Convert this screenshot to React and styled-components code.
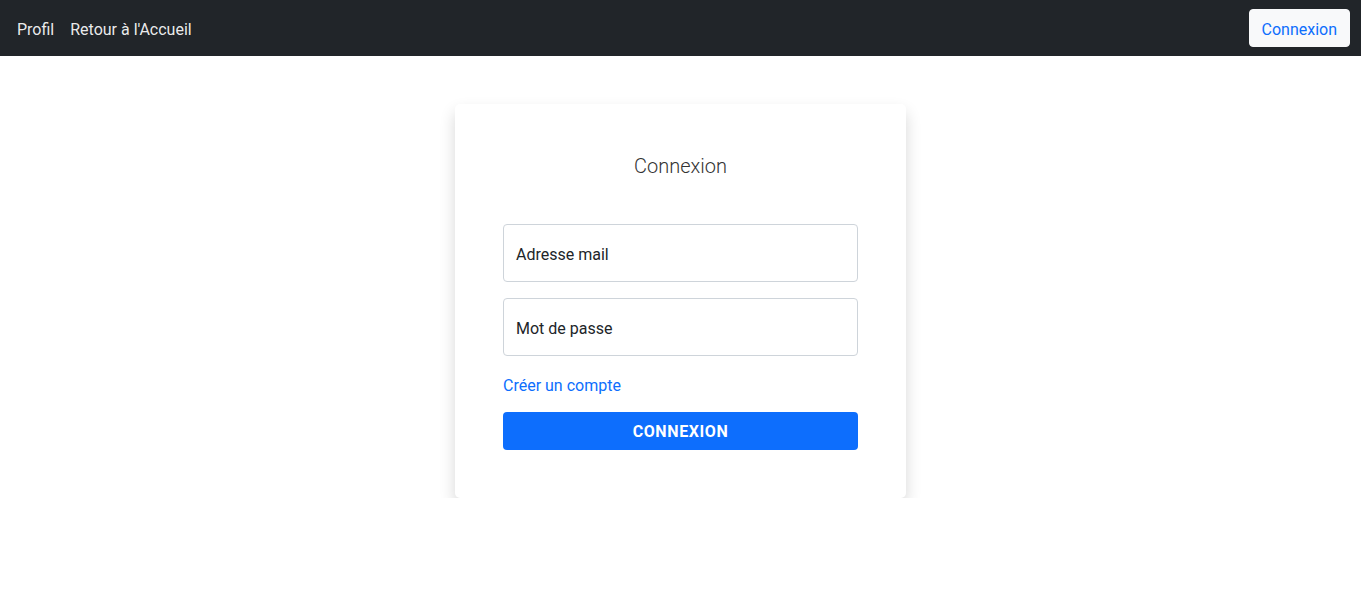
import React from 'react';
import styled, { createGlobalStyle } from 'styled-components';

const GlobalStyle = createGlobalStyle`
  * { box-sizing: border-box; }
  body {
    margin: 0;
    font-family: "Segoe UI", Roboto, "Noto Sans", "Liberation Sans", sans-serif;
    font-size: 16px;
    line-height: 1.5;
    color: #212529;
    background: #fff;
  }
`;

const Navbar = styled.nav`
  height: 56px;
  background: #212529;
  display: flex;
  align-items: center;
  justify-content: space-between;
  padding: 0 11px 0 17px;
`;

const NavLinks = styled.div`
  display: flex;
  gap: 16px;
  padding-top: 3px;
`;

const NavLink = styled.a`
  color: rgba(255, 255, 255, 0.92);
  text-decoration: none;
  font-size: 16px;
`;

const LightButton = styled.button`
  height: 38px;
  padding: 3px 12px 0;
  background: #f8f9fa;
  color: #0d6efd;
  border: 1px solid #f8f9fa;
  border-radius: 4px;
  font: inherit;
  font-size: 16px;
  cursor: pointer;
`;

const Main = styled.main`
  display: flex;
  justify-content: center;
  padding-top: 48px;
`;

const Card = styled.div`
  width: 451px;
  background: #fff;
  border-radius: 5px;
  box-shadow: 0 8px 16px rgba(0, 0, 0, 0.16);
  padding: 48px;
  display: flex;
  flex-direction: column;
`;

const Title = styled.h5`
  margin: 0 0 46px;
  font-size: 20px;
  font-weight: 300;
  line-height: 24px;
  padding-top: 2px;
  text-align: center;
  color: #333;
`;

const Field = styled.div`
  height: 58px;
  border: 1px solid #ced4da;
  border-radius: 4px;
  display: flex;
  align-items: center;
  padding: 3px 12px 0;
  margin-bottom: ${(p) => p.$mb || 0}px;
  color: #212529;
  font-size: 16px;
`;

const Link = styled.a`
  margin: 18px 0 14px;
  color: #0d6efd;
  text-decoration: none;
  font-size: 16px;
  line-height: 24px;
`;

const PrimaryButton = styled.button`
  height: 38px;
  padding-top: 3px;
  background: #0d6efd;
  color: #fff;
  border: none;
  border-radius: 4px;
  font: inherit;
  font-weight: 700;
  letter-spacing: 0.6px;
  text-transform: uppercase;
  cursor: pointer;
`;

export default function App() {
  return (
    <>
      <GlobalStyle />
      <Navbar>
        <NavLinks>
          <NavLink href="#">Profil</NavLink>
          <NavLink href="#">Retour à l'Accueil</NavLink>
        </NavLinks>
        <LightButton>Connexion</LightButton>
      </Navbar>
      <Main>
        <Card>
          <Title>Connexion</Title>
          <Field $mb={16}>Adresse mail</Field>
          <Field>Mot de passe</Field>
          <Link href="#">Créer un compte</Link>
          <PrimaryButton>Connexion</PrimaryButton>
        </Card>
      </Main>
    </>
  );
}
